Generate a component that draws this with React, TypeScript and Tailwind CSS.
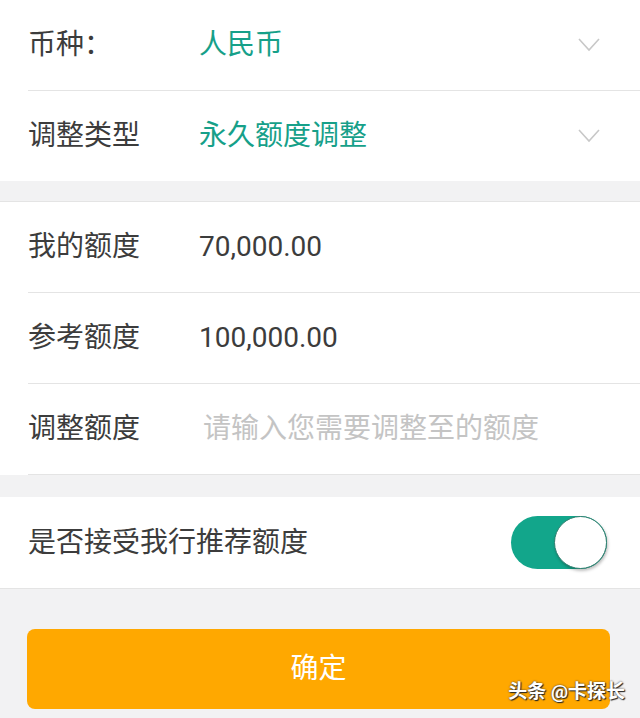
import React, { useState } from 'react'

const font = "font-['Roboto','Noto_Sans_CJK_SC',sans-serif]"

const Chevron = () => (
   <svg width="22" height="14" viewBox="0 0 22 14" fill="none" className="mr-[40px]">
      <path d="M1 1 L11 12 L21 1" stroke="#c8c8c8" strokeWidth="1.6" />
   </svg>
)

type RowProps = {
   label: string
   children?: React.ReactNode
   border?: boolean
}

const Row = ({ label, children, border = true }: RowProps) => (
   <div className="pl-[28px] bg-white">
      <div className={`flex items-center ${border ? 'h-[91px] border-b border-[#e4e4e4]' : 'h-[90px]'}`}>
         <span className="w-[171px] shrink-0 text-[28px] text-[#3c3c3c]">{label}</span>
         {children}
      </div>
   </div>
)

const App = () => {
   const [accept, setAccept] = useState(true)

   return (
      <div className={`${font} relative min-h-[718px] bg-[#f2f2f3]`}>
         {/* currency + type */}
         <Row label="币种：">
            <span className="flex-1 text-[28px] text-[#16a089]">人民币</span>
            <Chevron />
         </Row>
         <Row label="调整类型" border={false}>
            <span className="flex-1 text-[28px] text-[#16a089]">永久额度调整</span>
            <Chevron />
         </Row>

         <div className="h-[21px] bg-[#f2f2f3] border-b border-[#e4e4e4]" />

         {/* amounts */}
         <Row label="我的额度">
            <span className="text-[28px] text-[#3c3c3c]">70,000.00</span>
         </Row>
         <Row label="参考额度">
            <span className="text-[28px] text-[#3c3c3c]">100,000.00</span>
         </Row>
         <Row label="调整额度">
            <input
               placeholder="请输入您需要调整至的额度"
               className="flex-1 min-w-0 mr-[20px] pl-[4px] text-[28px] text-[#3c3c3c] placeholder:text-[#c4c4c4] outline-none bg-transparent"
            />
         </Row>

         <div className="h-[22px] bg-[#f2f2f3]" />

         {/* toggle */}
         <div className="h-[92px] pl-[28px] pr-[33px] bg-white flex items-center justify-between border-b border-[#e4e4e4]">
            <span className="text-[28px] text-[#3c3c3c]">是否接受我行推荐额度</span>
            <button
               onClick={() => setAccept(!accept)}
               className={`relative w-[96px] h-[53px] rounded-full ${accept ? 'bg-[#12a68b]' : 'bg-[#dcdcdc]'}`}
            >
               <span
                  className={`absolute top-0 w-[53px] h-[53px] rounded-full bg-white border border-[#2e7f6f] shadow-[1px_2px_3px_rgba(0,0,0,0.25)] ${accept ? 'right-0' : 'left-0'}`}
               />
            </button>
         </div>

         {/* confirm */}
         <div className="px-[27px] pt-[40px] pb-[9px]">
            <button className="w-[583px] h-[80px] rounded-[8px] bg-[#ffa800] text-white text-[28px]">
               确定
            </button>
         </div>

         <span className="absolute right-[15px] bottom-[12px] text-[19px] font-bold text-white [text-shadow:0_0_2px_#333,1px_1px_1px_#222]">
            头条 @卡探长
         </span>
      </div>
   )
}

export default App
